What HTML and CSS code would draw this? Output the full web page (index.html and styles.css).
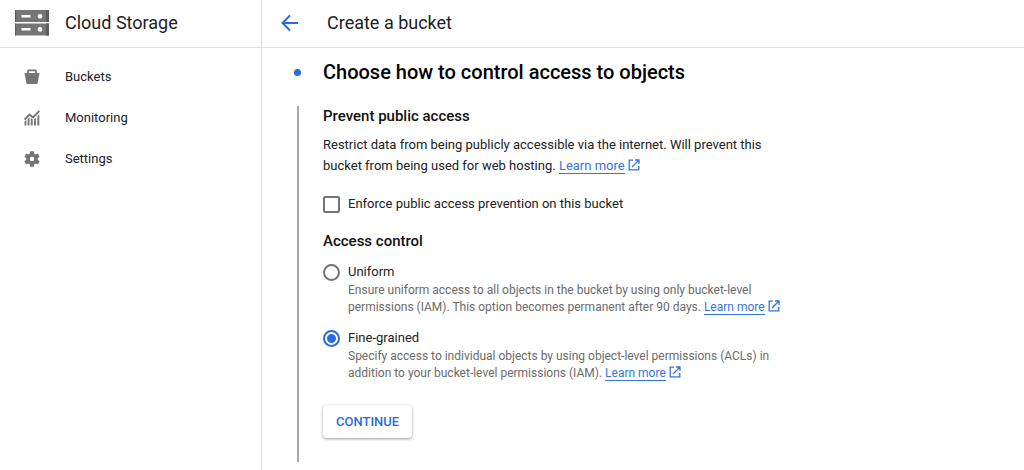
FILE: index.html
```html
<!DOCTYPE html>
<html lang="en">
<head>
<meta charset="utf-8">
<title>Create a bucket – Cloud Storage</title>
<link rel="stylesheet" href="styles.css">
</head>
<body>
<svg class="defs" aria-hidden="true">
  <symbol id="external" viewBox="0 0 12 12"><path d="M5 1.200H1.200v9.600h9.600V7M7 1h4v4M11 1 4 8" fill="none" stroke="currentColor" stroke-width="1.300"/></symbol>
</svg>
<div class="app">
  <aside class="sidebar">
    <header class="bar product">
      <svg class="product-icon" viewBox="0 0 34 26" aria-hidden="true">
        <path fill="#757575" d="M0 0h34v12H0zM0 13.500h34v12H0z"/>
        <path fill="#5c5c5c" d="M0 0h1v12H0zM31 0h3v12h-3zM0 13.500h1v12H0zM31 13.500h3v12h-3z"/>
        <path fill="#fff" d="M6.500 5h9v2.500h-9zM6.500 18h9v2.500h-9z"/>
        <circle cx="25" cy="6.200" r="2.300" fill="#fff"/><circle cx="25" cy="19.400" r="2.300" fill="#fff"/>
      </svg>
      <span class="bar-title">Cloud Storage</span>
    </header>
    <nav class="menu" aria-label="Cloud Storage">
      <a class="menu-item" href="#buckets">
        <svg class="menu-icon" viewBox="0 0 16 16" aria-hidden="true"><path fill="currentColor" fill-rule="evenodd" d="M4.500.5h7q1 0 1.200 1L13.200 4h2.300L13.700 14q-.2 1-1.200 1h-9q-1 0-1.200-1L.5 4h2.300l.5-2.500q.2-1 1.200-1zM5 2.300 4.800 4h6.400L11 2.300z"/></svg>
        Buckets</a>
      <a class="menu-item" href="#monitoring">
        <svg class="menu-icon" viewBox="0 0 16 16" aria-hidden="true"><path fill="none" stroke="currentColor" stroke-width="1.900" d="M.6 9.500 5.500 4.500l3.500 3L15.400 1"/><path fill="currentColor" d="M.5 11.500 2.400 10v5.500H.5zM3.600 8.900l1.900-1.700v8.300H3.600zM6.800 8l1.900 1.500v6H6.800zM10 9.300l1.900-1.600v7.800H10zM13.400 6.200l1.900-1.900v11.200h-1.900z"/></svg>
        Monitoring</a>
      <a class="menu-item" href="#settings">
        <svg class="menu-icon" viewBox="2 2 20 20" aria-hidden="true"><path fill="currentColor" d="M19.140 12.940c.04-.3.060-.61.060-.94 0-.32-.02-.64-.07-.94l2.030-1.580c.18-.14.230-.41.120-.61l-1.920-3.320c-.12-.22-.37-.29-.59-.22l-2.390.96c-.5-.38-1.030-.7-1.620-.94l-.36-2.540c-.04-.24-.24-.41-.48-.41h-3.840c-.24 0-.43.170-.47.410l-.36 2.540c-.59.240-1.130.570-1.620.940l-2.390-.96c-.22-.08-.47 0-.59.220L2.740 8.870c-.12.210-.08.470.120.610l2.030 1.580c-.05.300-.09.630-.09.940s.02.640.070.940l-2.030 1.580c-.18.140-.23.410-.12.610l1.920 3.320c.12.220.37.290.59.220l2.390-.96c.5.380 1.030.7 1.620.940l.36 2.540c.05.240.24.410.48.410h3.840c.24 0 .44-.17.47-.41l.36-2.540c.59-.24 1.130-.56 1.620-.94l2.390.96c.22.080.47 0 .59-.22l1.920-3.320c.12-.22.070-.47-.12-.61zM12 14.800a2.800 2.800 0 1 1 0-5.600 2.800 2.800 0 0 1 0 5.600z"/></svg>
        Settings</a>
    </nav>
  </aside>
  <main class="content">
    <header class="bar page-bar">
      <a class="back" href="#back" aria-label="Back"><svg class="back-icon" viewBox="0 0 18 18" aria-hidden="true"><path fill="none" stroke="currentColor" stroke-width="2" d="M17 9H2M9 1.500 1.500 9 9 16.500"/></svg></a>
      <h1 class="bar-title">Create a bucket</h1>
    </header>
    <section class="step">
      <span class="step-dot"></span>
      <h2 class="step-title">Choose how to control access to objects</h2>
      <span class="step-line"></span>
      <form class="step-body">
        <h3 class="heading">Prevent public access</h3>
        <p class="text">Restrict data from being publicly accessible via the internet. Will prevent this bucket from being used for web hosting. <a class="link" href="#learn-prevention">Learn more</a><svg class="ext" aria-hidden="true"><use href="#external"/></svg></p>
        <div class="choice enforce">
          <input class="box" type="checkbox" id="enforce">
          <label for="enforce">Enforce public access prevention on this bucket</label>
        </div>
        <h3 class="heading">Access control</h3>
        <div class="choice first">
          <input class="box round" type="radio" name="access" id="uniform">
          <label for="uniform">Uniform</label>
          <p class="hint">Ensure uniform access to all objects in the bucket by using only bucket-level permissions (IAM). This option becomes permanent after 90 days. <a class="link" href="#learn-uniform">Learn more</a><svg class="ext" aria-hidden="true"><use href="#external"/></svg></p>
        </div>
        <div class="choice second">
          <input class="box round" type="radio" name="access" id="fine" checked>
          <label for="fine">Fine-grained</label>
          <p class="hint">Specify access to individual objects by using object-level permissions (ACLs) in addition to your bucket-level permissions (IAM). <a class="link" href="#learn-fine">Learn more</a><svg class="ext" aria-hidden="true"><use href="#external"/></svg></p>
        </div>
        <button class="continue" type="button">CONTINUE</button>
      </form>
    </section>
  </main>
</div>
</body>
</html>
```
FILE: styles.css
```css
* { box-sizing: border-box; }
body { margin: 0; background: #fff; color: #202124; font: 14px/20px Roboto, "Liberation Sans", sans-serif; }
h1, h2, h3, p { margin: 0; }
.defs { position: absolute; width: 0; height: 0; }
.app { display: grid; grid-template-columns: 262px 1fr; min-height: 100vh; }
.sidebar { border-right: 1px solid #dedede; }
.bar { display: flex; align-items: center; height: 48px; padding-bottom: 2px; border-bottom: 1px solid #e0e0e0; }
.bar-title { font-size: 18px; line-height: 24px; font-weight: 400; }
.product { gap: 16px; padding-left: 15px; }
.product-icon { width: 34px; height: 26px; }
.menu { padding-top: 8px; }
.menu-item { display: flex; align-items: center; gap: 25px; height: 41px; padding-left: 24px; color: inherit; text-decoration: none; font-size: 13px; }
.menu-icon { width: 16px; height: 16px; color: #757575; }
.page-bar { gap: 28px; padding-left: 19px; }
.back { display: flex; color: #2a6cdb; }
.back-icon { width: 18px; height: 18px; }
.step { display: grid; grid-template-columns: 8px minmax(0, 480px); column-gap: 21px; row-gap: 21px; padding: 11px 16px 8px 32px; }
.step-dot { width: 7px; height: 7px; border-radius: 50%; background: #2a6cdb; align-self: center; }
.step-title { color: #000; font-size: 20px; line-height: 26px; font-weight: 500; }
.step-line { width: 2px; background: #a8a8a8; justify-self: center; }
.step-body { padding-bottom: 24px; }
.heading { color: #111; font-size: 15px; line-height: 20px; font-weight: 500; }
.text { margin-top: 8px; font-size: 13px; line-height: 21px; }
.link { color: #3474dd; text-decoration: none; border-bottom: 1px solid #3474dd; }
.ext { width: 12px; height: 12px; margin-left: 3px; color: #3474dd; vertical-align: -1px; }
.choice { display: grid; grid-template-columns: 17px 1fr; column-gap: 8px; align-items: center; font-size: 13px; }
.enforce { margin: 18px 0 17px; }
.first { margin-top: 11px; }
.second { margin-top: 12px; }
.box { appearance: none; width: 17px; height: 17px; margin: 0; border: 2px solid #757575; border-radius: 2px; background: #fff; }
.round { border-radius: 50%; }
.round:checked { border-color: #2a6cdb; background: radial-gradient(circle, #2a6cdb 4px, #fff 5px); }
.hint { grid-column: 2; color: #6b6b6b; font-size: 12px; line-height: 17px; }
.continue { display: block; margin-top: 23px; height: 33px; padding: 0 13px; border: 0; border-radius: 4px; background: #fff; color: #2a6cdb; font: 500 13px/20px Roboto, "Liberation Sans", sans-serif; box-shadow: 0 1px 3px rgba(0, 0, 0, .4); }
```
